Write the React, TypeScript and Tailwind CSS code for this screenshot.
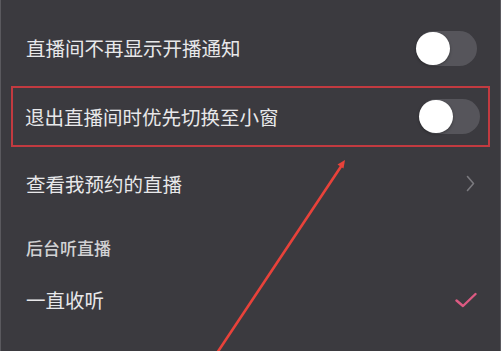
import { ReactNode } from "react";

function Toggle() {
  return (
    <div className="relative h-[35px] w-[61px] rounded-full bg-[#56555b]">
      <div className="absolute left-0 top-[1px] h-[33px] w-[34px] rounded-full bg-white shadow-[0_1px_3px_rgba(0,0,0,0.35)]" />
    </div>
  );
}

function Row({ h, children, right }: { h: string; children: ReactNode; right?: ReactNode }) {
  return (
    <div className={`flex items-center justify-between pl-[25px] pr-[23px] ${h}`}>
      <span className="text-[19.5px] leading-none text-[#e8e8ea]">{children}</span>
      {right}
    </div>
  );
}

export default function App() {
  return (
    <div
      className="relative h-[351px] w-[501px] overflow-hidden border-x border-[#5a595e] bg-[#3b3a3f]"
      style={{ fontFamily: '"Noto Sans CJK SC", "Noto Sans", sans-serif' }}
    >
      <div className="flex flex-col pt-[15px]">
        <Row h="h-[66px]" right={<Toggle />}>直播间不再显示开播通知</Row>

        {/* highlighted row */}
        <div className="mx-[10px] mt-[5px] flex h-[61px] items-center justify-between border-2 border-[#c23a40] pl-[12px] pr-[8px]">
          <span className="text-[19.5px] leading-none text-[#e8e8ea]">退出直播间时优先切换至小窗</span>
          <Toggle />
        </div>

        <Row
          h="h-[73px]"
          right={
            <svg className="mr-[2px] h-[17px] w-[9px]" viewBox="0 0 9 17" fill="none">
              <path d="M1.5 1.5 L7.5 8.5 L1.5 15.5" stroke="#7a797e" strokeWidth="1.6" strokeLinecap="round" strokeLinejoin="round" />
            </svg>
          }
        >
          查看我预约的直播
        </Row>

        <div className="flex h-[54px] items-center pl-[25px]">
          <span className="text-[17px] font-medium leading-none text-[#d2d2d4]">后台听直播</span>
        </div>

        <Row
          h="h-[52px]"
          right={
            <svg className="h-[16px] w-[22px]" viewBox="0 0 22 16" fill="none">
              <path d="M1.5 8.5 L8 14 L20.5 2" stroke="#dc5a82" strokeWidth="2.4" strokeLinecap="round" strokeLinejoin="round" />
            </svg>
          }
        >
          一直收听
        </Row>
      </div>

      {/* annotation arrow */}
      <svg className="pointer-events-none absolute inset-0" width="501" height="351" viewBox="0 0 501 351">
        <line x1="216" y1="353" x2="341" y2="165" stroke="#e8423a" strokeWidth="2.6" strokeLinecap="round" />
        <path d="M344 160 L336.5 164.5 L342.5 168.5 Z" fill="#e8423a" />
      </svg>
    </div>
  );
}
